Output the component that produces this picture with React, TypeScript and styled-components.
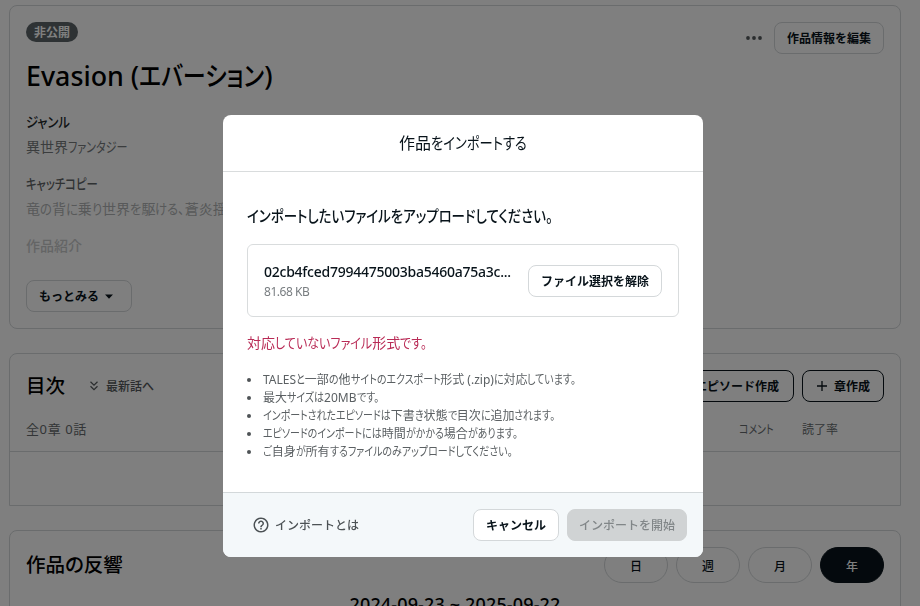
import { useLayoutEffect, useRef, useState } from "react";
import styled, { createGlobalStyle } from "styled-components";

const GlobalStyle = createGlobalStyle`
  * {
    box-sizing: border-box;
  }
  body {
    margin: 0;
    height: 606px;
    overflow: hidden;
    background-color: white;
    color: #08131a;
    font-family: "Noto Sans", "Noto Sans CJK JP", sans-serif;
    font-feature-settings: "palt";
  }
  h1, h2, p, ul {
    margin: 0;
    padding: 0;
  }
  button {
    font-family: "Noto Sans CJK JP", sans-serif;
    font-feature-settings: normal;
    color: inherit;
    padding: 0;
    white-space: nowrap;
  }
`;

const Page = styled.main`
  height: 606px;
  padding: 5px 19px 0px 9px;
  overflow: hidden;
  display: flex;
  flex-direction: column;
  gap: 24px;
`;
const Card = styled.section<{ $height: number; $square?: boolean }>`
  flex: none;
  height: ${(props) => props.$height}px;
  border: 1px solid #d4d8da;
  border-radius: ${(props) => (props.$square ? "8px 8px 0px 0px" : "8px")};
`;
const WorkCard = styled(Card)`
  padding: 16px;
  display: flex;
  flex-direction: column;
  align-items: flex-start;
`;
const WorkTop = styled.div`
  width: 100%;
  height: 32px;
  display: flex;
  justify-content: space-between;
`;
const Badge = styled.span`
  height: 20px;
  padding: 0px 8px;
  border-radius: 10px;
  background-color: #5c6569;
  color: white;
  font: 700 12px/20px "Noto Sans CJK JP", sans-serif;
  font-feature-settings: normal;
`;
const Actions = styled.div`
  display: flex;
  align-items: center;
  gap: 12px;
`;
const Button = styled.button<{
  $width: number;
  $strong?: boolean;
  $disabled?: boolean;
}>`
  width: ${(props) => props.$width}px;
  height: 32px;
  flex: none;
  display: flex;
  align-items: center;
  justify-content: center;
  gap: 6px;
  border: 1px solid
    ${(props) =>
      props.$disabled ? "#d0d3d4" : props.$strong ? "#08131a" : "#d4d8da"};
  border-radius: 8px;
  background-color: ${(props) => (props.$disabled ? "#d0d3d4" : "white")};
  color: ${(props) => (props.$disabled ? "#818688" : "#08131a")};
  font-size: 12px;
  font-weight: ${(props) => (props.$disabled ? 500 : 700)};
  line-height: 18px;
`;
const MoreButton = styled(Button)`
  padding-right: 6px;
`;
const Title = styled.h1`
  margin-top: 2px;
  font-size: 26.8px;
  font-weight: 500;
  line-height: 40px;
  color: black;
  white-space: nowrap;
`;
const Fields = styled.dl`
  height: 163px;
  margin: 14px 0px 7px;
  font-size: 14px;
  line-height: 24px;
  white-space: nowrap;
`;
const Term = styled.dt<{ $color: string }>`
  font-weight: 500;
  color: ${(props) => props.$color};
`;
const Detail = styled.dd<{ $color: string }>`
  margin: 1px 0px 13px;
  color: ${(props) => props.$color};
`;

const TocHeader = styled.div`
  height: 98px;
  padding: 16px 16px 0px;
  border-bottom: 1px solid #d4d8da;
`;
const TocRow = styled.div`
  height: 32px;
  display: flex;
  align-items: center;
  justify-content: space-between;
`;
const Heading = styled.h2`
  font-size: 19.5px;
  font-weight: 500;
  line-height: 32px;
  color: black;
`;
const Latest = styled.span`
  margin-left: 22px;
  display: flex;
  align-items: center;
  gap: 5px;
  color: #55595c;
  font: 500 12px/18px "Noto Sans CJK JP", sans-serif;
  font-feature-settings: normal;
`;
const Group = styled.div<{ $gap?: number }>`
  display: flex;
  align-items: center;
  gap: ${(props) => props.$gap ?? 0}px;
`;
const TocMeta = styled.div`
  margin-top: 17px;
  display: flex;
  justify-content: space-between;
  font-size: 13px;
  line-height: 20px;
  color: #666b6e;
`;
const Count = styled.span`
  letter-spacing: 0.6px;
`;
const Columns = styled.div`
  display: flex;
  gap: 28px;
  padding: 1px 46px 0px 0px;
  font-size: 12px;
`;

const Reaction = styled(Card)`
  padding: 16px;
`;
const ReactionTop = styled.div`
  height: 36px;
  display: flex;
  align-items: center;
  justify-content: space-between;
`;
const Period = styled.button<{ $active?: boolean }>`
  width: 64px;
  height: 36px;
  border: 1px solid ${(props) => (props.$active ? "#08131a" : "#d4d8da")};
  border-radius: 18px;
  background-color: ${(props) => (props.$active ? "#08131a" : "white")};
  color: ${(props) => (props.$active ? "white" : "#08131a")};
  font-size: 12px;
  font-weight: 500;
`;
const DateRange = styled.p`
  margin-top: 9px;
  text-align: center;
  font-size: 18px;
  font-weight: 500;
  line-height: 24px;
  color: black;
  letter-spacing: 0.15px;
`;

const Overlay = styled.div`
  position: fixed;
  inset: 0;
  padding: 115px 0px 0px 6px;
  display: flex;
  align-items: flex-start;
  justify-content: center;
  background-color: rgba(0, 0, 0, 0.5);
`;
const Modal = styled.div`
  width: 480px;
  height: 442px;
  display: flex;
  flex-direction: column;
  border-radius: 8px;
  overflow: hidden;
  background-color: white;
`;
const ModalHeader = styled.header`
  height: 57px;
  border-bottom: 1px solid #d9dcdd;
  text-align: center;
  font-size: 16px;
  line-height: 56px;
`;
const ModalBody = styled.div`
  flex: 1;
  padding: 32px 24px 0px;
`;
const Lead = styled.p`
  font-size: 16px;
  font-weight: 500;
  line-height: 24px;
  white-space: nowrap;
`;
const FileBox = styled.div`
  height: 73px;
  margin-top: 16px;
  padding: 0px 16px;
  display: flex;
  align-items: center;
  justify-content: space-between;
  border: 1px solid #d9dcdd;
  border-radius: 6px;
`;
const FileName = styled.p`
  width: 252px;
  font-size: 14px;
  font-weight: 500;
  line-height: 21px;
  white-space: nowrap;
  letter-spacing: -0.25px;
`;
const FileSize = styled.p`
  padding-top: 1px;
  font-size: 12px;
  line-height: 18px;
  color: #787d80;
  letter-spacing: -0.45px;
`;
const ErrorText = styled.p`
  margin-top: 15px;
  font-size: 14px;
  line-height: 21px;
  color: #b92b56;
`;
const Notes = styled.ul`
  margin-top: 18px;
  list-style: none;
  font-size: 12px;
  line-height: 18px;
  color: #5b6063;
`;
const Note = styled.li`
  display: flex;
  align-items: center;
  white-space: nowrap;
  &::before {
    content: "";
    width: 4px;
    height: 4px;
    margin-right: 12px;
    border-radius: 50%;
    background-color: #4e5356;
  }
`;
const ModalFooter = styled.footer`
  height: 65px;
  padding: 0px 16px 0px 29px;
  display: flex;
  align-items: center;
  justify-content: space-between;
  border-top: 1px solid #d3d8da;
  background-color: #f4f8fa;
`;
const Help = styled.span`
  display: flex;
  align-items: center;
  gap: 5px;
  color: #4c5255;
  font: 500 12px/18px "Noto Sans CJK JP", sans-serif;
  font-feature-settings: normal;
`;
const KanaRun = styled.span<{ $scale: number }>`
  display: inline-block;
  white-space: nowrap;
  transform: scaleX(${(props) => props.$scale});
  transform-origin: left center;
`;

const notes = [
  "TALESと一部の他サイトのエクスポート形式 (.zip)に対応しています。",
  "最大サイズは20MBです。",
  "インポートされたエピソードは下書き状態で目次に追加されます。",
  "エピソードのインポートには時間がかかる場合があります。",
  "ご自身が所有するファイルのみアップロードしてください。",
];
const periods = ["日", "週", "月", "年"];

interface IKana {
  text: string;
  scale: number;
}

// the run keeps its full layout width when scaled, so pull the next text back
function Kana({ text, scale }: IKana) {
  const ref = useRef<HTMLSpanElement>(null);
  const [excess, setExcess] = useState(0);
  useLayoutEffect(() => {
    if (!ref.current) return;
    const style = getComputedStyle(ref.current);
    setExcess(parseFloat(style.width) * (1 - scale));
  }, [text, scale]);
  return (
    <KanaRun ref={ref} $scale={scale} style={{ marginRight: -excess }}>
      {text}
    </KanaRun>
  );
}

// narrow kana, full width kanji
function Narrow({ text, scale = 0.83 }: { text: string; scale?: number }) {
  return (
    <span>
      {text
        .split(/([\u3001-\u3002\u3041-\u30ff]+)/)
        .map((part, index) =>
          index % 2 === 1 ? (
            <Kana key={index} text={part} scale={scale} />
          ) : (
            part
          )
        )}
    </span>
  );
}

function PlusIcon() {
  return (
    <svg width="12" height="12" viewBox="0 0 12 12" fill="none" stroke="currentColor">
      <path d="M6 1v10M1 6h10" strokeWidth="1.3" />
    </svg>
  );
}

function App() {
  return (
    <>
      <GlobalStyle />
      <Page>
        <WorkCard $height={324}>
          <WorkTop>
            <Badge>非公開</Badge>
            <Actions>
              <svg width="16" height="16" viewBox="0 0 16 16" fill="#555a5d">
                <circle cx="2" cy="8" r="1.9" />
                <circle cx="8" cy="8" r="1.9" />
                <circle cx="14" cy="8" r="1.9" />
              </svg>
              <Button $width={110}>作品情報を編集</Button>
            </Actions>
          </WorkTop>
          <Title>
            <Narrow text="Evasion (エバーション)" scale={0.86} />
          </Title>
          <Fields>
            <Term $color="#22282b">
              <Narrow text="ジャンル" scale={0.88} />
            </Term>
            <Detail $color="#767a7d">
              <Narrow text="異世界ファンタジー" scale={0.79} />
            </Detail>
            <Term $color="#5f6467">
              <Narrow text="キャッチコピー" scale={0.81} />
            </Term>
            <Detail $color="#b0b3b4">
              <Narrow text="竜の背に乗り世界を駆ける、蒼炎揺" scale={0.88} />
            </Detail>
            <Term $color="#c8cacb">作品紹介</Term>
          </Fields>
          <MoreButton $width={106}>
            もっとみる
            <svg width="8" height="5" viewBox="0 0 8 5" fill="currentColor">
              <path d="M0 0.5h8L4 4.7z" />
            </svg>
          </MoreButton>
        </WorkCard>
        <Card $height={153} $square>
          <TocHeader>
            <TocRow>
              <Group>
                <Heading>目次</Heading>
                <Latest>
                  <svg width="14" height="12" viewBox="0 0 14 12" fill="none" stroke="currentColor">
                    <path d="M3.5 1.8 7 5.2l3.5-3.4M3.5 6.3 7 9.7l3.5-3.4" strokeWidth="1.2" />
                  </svg>
                  最新話へ
                </Latest>
              </Group>
              <Group $gap={8}>
                <Button $width={132} $strong>
                  <PlusIcon />
                  エピソード作成
                </Button>
                <Button $width={82} $strong>
                  <PlusIcon />
                  章作成
                </Button>
              </Group>
            </TocRow>
            <TocMeta>
              <Count>全0章 0話</Count>
              <Columns>
                <Narrow text="コメント" />
                <span>読了率</span>
              </Columns>
            </TocMeta>
          </TocHeader>
        </Card>
        <Reaction $height={300}>
          <ReactionTop>
            <Heading>作品の反響</Heading>
            <Group $gap={8}>
              {periods.map((period) => (
                <Period key={period} $active={period === "年"}>
                  {period}
                </Period>
              ))}
            </Group>
          </ReactionTop>
          <DateRange>2024-09-23 ~ 2025-09-22</DateRange>
        </Reaction>
      </Page>
      <Overlay>
        <Modal>
          <ModalHeader>
            <Narrow text="作品をインポートする" />
          </ModalHeader>
          <ModalBody>
            <Lead>
              <Narrow text="インポートしたいファイルをアップロードしてください。" scale={0.84} />
            </Lead>
            <FileBox>
              <div>
                <FileName>02cb4fced7994475003ba5460a75a3c...</FileName>
                <FileSize>81.68 KB</FileSize>
              </div>
              <Button $width={134}>ファイル選択を解除</Button>
            </FileBox>
            <ErrorText>
              <Narrow text="対応していないファイル形式です。" scale={0.86} />
            </ErrorText>
            <Notes>
              {notes.map((note) => (
                <Note key={note}>
                  <Narrow text={note} />
                </Note>
              ))}
            </Notes>
          </ModalBody>
          <ModalFooter>
            <Help>
              <svg width="18" height="18" viewBox="0 0 24 24" fill="currentColor">
                <path d="M11 18h2v-2h-2v2zm1-16C6.48 2 2 6.48 2 12s4.480 10 10 10 10-4.480 10-10S17.520 2 12 2zm0 18c-4.410 0-8-3.590-8-8s3.590-8 8-8 8 3.590 8 8-3.590 8-8 8zm0-14c-2.210 0-4 1.790-4 4h2c0-1.100.9-2 2-2s2 .9 2 2c0 2-3 1.750-3 5h2c0-2.250 3-2.500 3-5 0-2.210-1.790-4-4-4z" />
              </svg>
              インポートとは
            </Help>
            <Group $gap={8}>
              <Button $width={86}>キャンセル</Button>
              <Button $width={120} $disabled>
                インポートを開始
              </Button>
            </Group>
          </ModalFooter>
        </Modal>
      </Overlay>
    </>
  );
}

export default App;
